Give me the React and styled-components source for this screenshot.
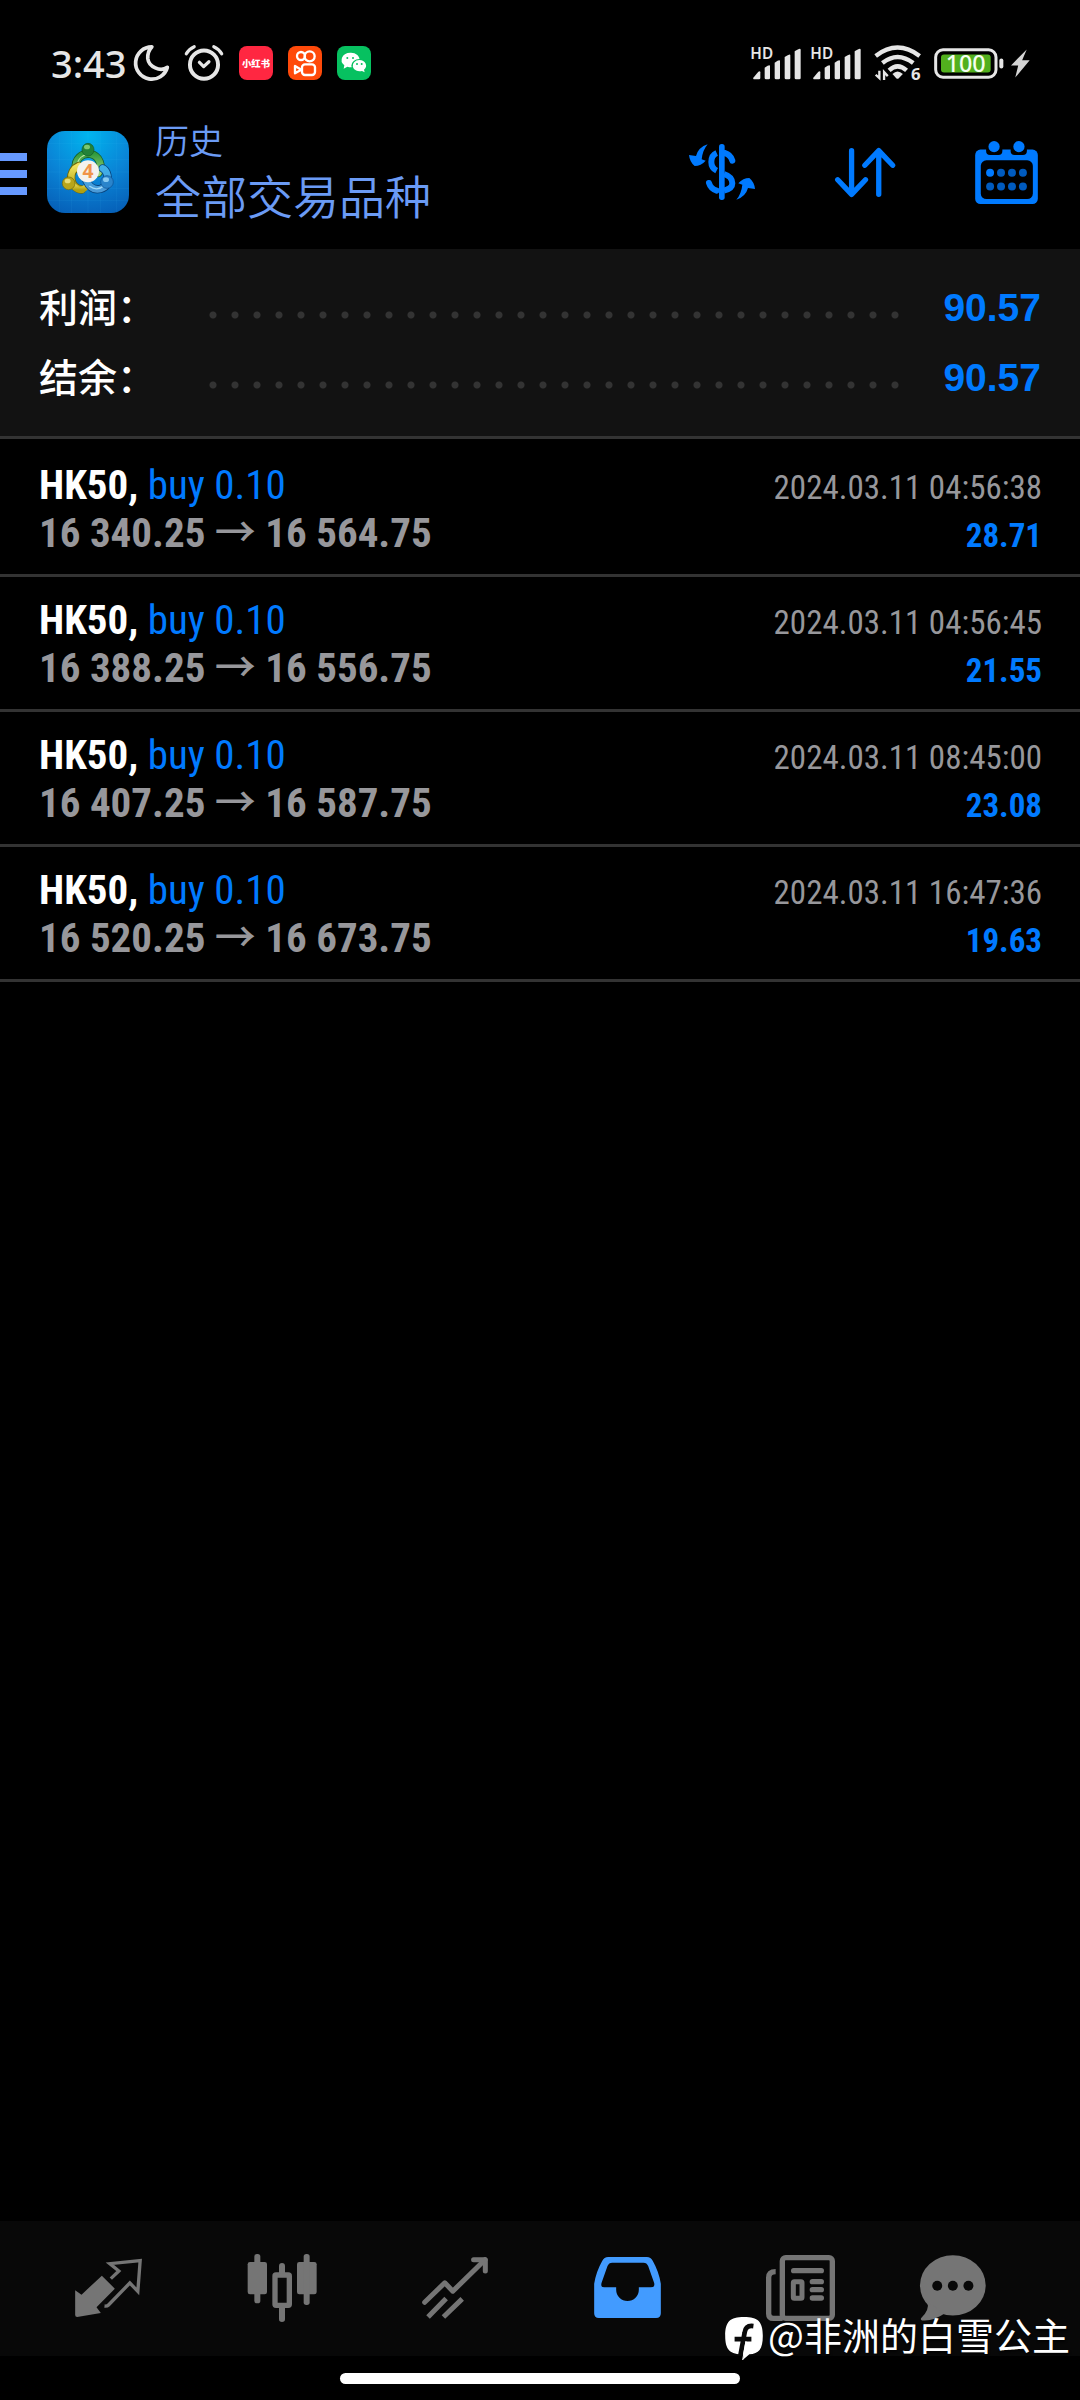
import React from 'react';
import styled, { createGlobalStyle } from 'styled-components';

const GlobalStyle = createGlobalStyle`
  * {
    box-sizing: border-box;
  }
  body {
    margin: 0;
    background-color: #000;
  }
  button {
    display: flex;
    align-items: center;
    justify-content: center;
    padding: 0;
    border: 0;
    background: none;
    color: inherit;
    cursor: pointer;
  }
  svg {
    display: block;
    flex-shrink: 0;
    overflow: visible;
  }
`;

const cjk = '"Noto Sans CJK SC", sans-serif';
const narrow = `"Roboto Condensed", Roboto, ${cjk}`;

const PageStyles = styled.div`
  min-height: 100vh;
  display: flex;
  flex-direction: column;
  background-color: #000;
  color: #fff;
  font-family: Roboto, ${cjk};
`;

const StatusBar = styled.div`
  display: flex;
  align-items: center;
  justify-content: space-between;
  padding: 44px 50px 13px 51px;
  color: #e6e6e6;
`;

const StatusGroup = styled.div`
  display: flex;
  align-items: center;
  gap: ${(props) => props.$gap}px;
`;

const Clock = styled.span`
  font-family: 'Noto Sans', sans-serif;
  font-size: 38px;
  font-weight: 500;
  line-height: 38px;
`;

const Header = styled.header`
  display: flex;
  align-items: center;
  justify-content: space-between;
  height: 154px;
  padding-right: 42px;
  color: #6b9bf5;
`;

const HeaderStart = styled.div`
  display: flex;
  align-items: center;
`;

const MenuButton = styled.button`
  width: 27px;
  margin-right: 20px;
  padding-top: 3px;
  .lines {
    width: 100%;
    display: grid;
    gap: 9px;
  }
  .lines span {
    height: 8px;
    background-color: #6699ff;
  }
`;

const Titles = styled.div`
  display: grid;
  gap: 3px;
  margin-left: 26px;
  padding-bottom: 4px;
  font-family: ${cjk};
  font-weight: 350;
  h1,
  p {
    margin: 0;
    font-weight: inherit;
  }
  p {
    font-size: 34px;
    line-height: 44px;
  }
  h1 {
    font-size: 46px;
    line-height: 58px;
  }
`;

const HeaderActions = styled.div`
  display: flex;
  align-items: center;
  gap: 80px;
  color: #007aff;
`;

const Summary = styled.dl`
  margin: 0;
  padding: 24px 39px 23px;
  background-color: #121212;
  border-bottom: 3px solid #333;
`;

const SummaryRow = styled.div`
  display: flex;
  align-items: center;
  height: 70px;
  dt {
    width: 163px;
    padding-bottom: 7px;
    font-family: ${cjk};
    font-size: 39px;
    font-weight: 500;
  }
  dd {
    width: 135px;
    margin: 0;
    text-align: right;
    font-family: 'Liberation Sans', sans-serif;
    font-size: 39px;
    font-weight: 700;
    color: #007aff;
  }
`;

const Leader = styled.span`
  flex: 1;
  height: 8px;
  margin-top: 14px;
  background-image: radial-gradient(circle, #333 3px, transparent 4px);
  background-size: 22px 8px;
  background-repeat: repeat-x;
`;

const Deals = styled.ul`
  flex: 1;
  margin: 0;
  padding: 3px 0 0;
  list-style: none;
  font-family: ${narrow};
`;

const DealRow = styled.li`
  padding: 19px 38px 17px 39px;
  border-bottom: 3px solid #333;
`;

const DealLine = styled.div`
  display: flex;
  align-items: baseline;
  justify-content: space-between;
  height: 48px;
  font-size: 41px;
  line-height: 48px;
  color: #97979b;
  white-space: nowrap;
`;

const Side = styled.span`
  color: #007aff;
`;

const Symbol = styled.strong`
  color: #fff;
`;

const Prices = styled.span`
  font-weight: 700;
`;

const Arrow = styled.span`
  font-family: ${cjk};
  font-weight: 500;
  line-height: 0;
`;

const DealTime = styled.time`
  font-size: 33px;
`;

const Profit = styled.span`
  font-size: 33px;
  font-weight: 700;
  color: #007aff;
`;

const Footer = styled.footer`
  position: relative;
`;

const TabBar = styled.nav`
  display: flex;
  height: 135px;
  padding: 0 61px 2px 22px;
  background-color: #080808;
`;

const Tab = styled.button`
  flex: ${(props) => (props.$last ? 132 : 173)} 1 0;
  color: ${(props) => (props.$active ? '#429bff' : '#757575')};
`;

const GestureArea = styled.div`
  padding: 17px 0 16px;
  span {
    display: block;
    width: 37%;
    height: 11px;
    margin: 0 auto;
    border-radius: 6px;
    background-color: #fff;
  }
`;

const Watermark = styled.div`
  position: absolute;
  right: 10px;
  bottom: 30px;
  display: flex;
  align-items: center;
  gap: 5px;
  font-family: ${cjk};
  font-size: 38px;
  line-height: 56px;
  text-shadow: 1px 2px 2px rgba(0, 0, 0, 0.6);
  span {
    padding-bottom: 8px;
  }
`;

const MoonIcon = () => (
  <svg width="35" height="36" viewBox="0 0 104 106" fill="none" stroke="currentColor" strokeWidth="11" strokeLinejoin="round">
    <path d="M53 5A48 48 0 1 0 99 66C78 80 44 65 41 40C40 25 46 12 53 5z" />
  </svg>
);

const AlarmIcon = () => (
  <svg width="40" height="36" viewBox="0 0 120 110" fill="none" stroke="currentColor" strokeWidth="10" strokeLinecap="round">
    <circle cx="60" cy="60" r="43" strokeWidth="12" />
    <path d="M46 53L59 66L75 51" strokeLinejoin="round" />
    <path d="M6 27Q14 12 30 5M114 27Q106 12 90 5" />
  </svg>
);

const RednoteIcon = () => (
  <svg width="34" height="34" viewBox="0 0 102 102">
    <rect width="102" height="102" rx="24" fill="#ff2741" />
    <text x="51" y="62" textAnchor="middle" fontFamily="Noto Sans CJK SC" fontWeight="900" fontSize="28" fill="#fff">
      小红书
    </text>
  </svg>
);

const KuaishouIcon = () => (
  <svg width="34" height="34" viewBox="0 0 102 102">
    <rect width="102" height="102" rx="24" fill="#ff4a0a" />
    <g fill="none" stroke="#fff" strokeWidth="7" strokeLinejoin="round">
      <circle cx="39" cy="30" r="12" />
      <circle cx="65" cy="31" r="15" />
      <rect x="42" y="55" width="39" height="32" rx="9" />
      <path d="M40 71L21 60V82z" />
    </g>
  </svg>
);

const WechatIcon = () => (
  <svg width="34" height="34" viewBox="0 0 102 102">
    <rect width="102" height="102" rx="24" fill="#07c160" />
    <path d="M40 20a26 22 0 0 0-18 38l-2 10 11-6a26 22 0 1 0 9-42z" fill="#fff" />
    <ellipse cx="67" cy="59" rx="24" ry="20" fill="#07c160" />
    <path d="M67 42a21 17 0 1 0 8 33l8 4-2-8a21 17 0 0 0-14-29z" fill="#fff" />
    <g fill="#07c160">
      <circle cx="31" cy="36" r="3" />
      <circle cx="48" cy="36" r="3" />
      <circle cx="60" cy="54" r="3" />
      <circle cx="74" cy="54" r="3" />
    </g>
  </svg>
);

const SignalIcon = () => (
  <svg width="51" height="33" viewBox="0 0 153 99" fill="currentColor">
    <text x="-2" y="36" fontFamily="Noto Sans" fontWeight="600" fontSize="46">
      HD
    </text>
    <path d="M7 92L22 74Q28 70 28 76V93Q28 97 24 97H9Q5 97 7 92z" />
    <path d="M41 62Q56 52 57 56V93Q57 97 53 97H45Q41 97 41 93z" />
    <path d="M71 47Q87 36 87 42V93Q87 97 83 97H75Q71 97 71 93z" />
    <path d="M101 30Q118 18 118 25V93Q118 97 114 97H105Q101 97 101 93z" />
    <path d="M131 13Q149 0 149 8V93Q149 97 145 97H135Q131 97 131 93z" />
  </svg>
);

const WifiIcon = () => (
  <svg width="48" height="36" viewBox="0 0 143 106" fill="none" stroke="currentColor" strokeWidth="13">
    <path d="M5 32Q70 -18 136 32" />
    <path d="M25 53Q70 17 117 53" />
    <path d="M45 75Q70 51 97 75" />
    <path d="M55 86Q70 70 86 86L73 99Q70 101 67 99z" fill="currentColor" stroke="none" />
    <path d="M16 76V98L5 88M30 104V80L41 92" strokeWidth="7" />
    <text x="110" y="103" fontFamily="Noto Sans" fontWeight="700" fontSize="50" fill="currentColor" stroke="none">
      6
    </text>
  </svg>
);

const BatteryIcon = () => (
  <svg width="70" height="31" viewBox="0 0 210 92">
    <rect x="5" y="5" width="181" height="82" rx="22" fill="none" stroke="currentColor" strokeWidth="9" />
    <rect x="21" y="19" width="149" height="54" rx="9" fill="#52b01e" />
    <rect x="196" y="31" width="12" height="30" rx="6" fill="currentColor" />
    <text x="95" y="71" textAnchor="middle" fontFamily="Noto Sans" fontWeight="500" fontSize="70" fill="#f4fff0">
      100
    </text>
  </svg>
);

const BoltIcon = () => (
  <svg width="19" height="29" viewBox="0 0 58 86" fill="#d4d4d4">
    <path d="M48 0L0 49H22L13 86L57 33H34z" />
  </svg>
);

const AppLogo = () => (
  <svg width="82" height="82" viewBox="0 0 246 246">
    <defs>
      <radialGradient id="tile" cx="50%" cy="5%" r="100%">
        <stop offset="0" stopColor="#00b4ee" />
        <stop offset="0.55" stopColor="#0a84d6" />
        <stop offset="1" stopColor="#0660b8" />
      </radialGradient>
      <linearGradient id="green" x1="0" y1="0" x2="0" y2="1">
        <stop offset="0" stopColor="#2f9a3c" />
        <stop offset="1" stopColor="#9ad07a" />
      </linearGradient>
      <linearGradient id="yellow" x1="0" y1="0" x2="0" y2="1">
        <stop offset="0" stopColor="#f0e25c" />
        <stop offset="1" stopColor="#b0a010" />
      </linearGradient>
      <linearGradient id="blue" x1="0" y1="0" x2="0" y2="1">
        <stop offset="0" stopColor="#3fb0ea" />
        <stop offset="1" stopColor="#4a9ad8" />
      </linearGradient>
    </defs>
    <rect width="246" height="246" rx="54" fill="url(#tile)" />
    <path
      d="M37 0V246M74 0V246M123 0V246M160 0V246M209 0V246M0 37H246M0 86H246M0 123H246M0 172H246M0 209H246"
      stroke="#5fd0ff"
      strokeOpacity="0.12"
      strokeWidth="2"
    />
    <g fill="none" strokeLinecap="round">
      <path d="M87 112A37 37 0 1 1 154 126" stroke="#175f2a" strokeWidth="25" />
      <path d="M87 112A37 37 0 1 1 154 126" stroke="url(#green)" strokeWidth="20" />
      <path d="M91 98A34 34 0 0 1 120 71" stroke="#b9e6a0" strokeWidth="4" />
      <path d="M96 105A37 37 0 0 0 104 176" stroke="#6f6808" strokeWidth="25" />
      <path d="M96 105A37 37 0 0 0 104 176" stroke="url(#yellow)" strokeWidth="20" />
      <path d="M72 158Q96 187 114 171" stroke="url(#yellow)" strokeWidth="18" />
      <path d="M118 148Q132 180 160 174Q188 166 181 132Q177 116 167 112" stroke="#07447e" strokeWidth="25" />
      <path d="M118 148Q132 180 160 174Q188 166 181 132Q177 116 167 112" stroke="url(#blue)" strokeWidth="20" />
      <path d="M128 166Q150 182 171 164" stroke="#a3dcfa" strokeWidth="4" />
    </g>
    <ellipse cx="123" cy="56" rx="18" ry="19" fill="#228238" stroke="#145c26" strokeWidth="2" />
    <ellipse cx="120" cy="48" rx="9" ry="7" fill="#7bc873" />
    <circle cx="65" cy="157" r="19" fill="#b8a51a" stroke="#716909" strokeWidth="2" />
    <ellipse cx="62" cy="150" rx="9" ry="7" fill="#e8dc74" />
    <circle cx="180" cy="153" r="19" fill="#2a84cb" stroke="#0a4f91" strokeWidth="2" />
    <ellipse cx="177" cy="146" rx="9" ry="7" fill="#87caf2" />
    <circle cx="123" cy="121" r="33" fill="#f4f2ee" />
    <text x="123" y="142" textAnchor="middle" fontFamily="Noto Sans" fontWeight="700" fontSize="58" fill="#f0944a">
      4
    </text>
  </svg>
);

const exchangeArrow = 'M56 1Q28 10 21 36L0 33Q2 54 17 66Q36 66 50 50L38 46Q41 18 56 1z';

const CurrencyIcon = () => (
  <svg width="66" height="56" viewBox="0 0 198 168" fill="currentColor">
    <rect x="90" y="0" width="17" height="168" rx="8" />
    <g fill="none" stroke="currentColor" strokeWidth="18">
      <path d="M83 27Q67 34 67 54Q67 72 83 80" />
      <path d="M107 27Q125 32 130 50" strokeLinecap="round" />
      <path d="M105 90Q130 98 130 118Q130 134 105 140" />
      <path d="M83 140Q65 134 60 117" strokeLinecap="round" />
    </g>
    <path d={exchangeArrow} />
    <path d={exchangeArrow} transform="rotate(180 99 84)" />
  </svg>
);

const SortIcon = () => (
  <svg width="60" height="49" viewBox="0 0 181 148" fill="none" stroke="currentColor" strokeWidth="16" strokeLinecap="round" strokeLinejoin="round">
    <path d="M50 8V140M8 96L50 140L92 96" />
    <path d="M132 140V8M90 52L132 8L174 52" />
  </svg>
);

const CalendarIcon = () => (
  <svg width="63" height="63" viewBox="0 0 189 190" fill="currentColor">
    <rect y="26" width="189" height="164" rx="16" />
    <rect x="17" y="58" width="157" height="117" rx="17" fill="#000" />
    <rect x="33" y="10" width="49" height="32" rx="12" fill="#000" />
    <rect x="107" y="10" width="49" height="32" rx="12" fill="#000" />
    <circle cx="57" cy="17" r="17" />
    <circle cx="132" cy="17" r="17" />
    {[96, 137].map((cy) =>
      [45, 78, 111, 144].map((cx) => (
        <circle key={`${cx}-${cy}`} cx={cx} cy={cy} r="12" opacity={cx === 45 && cy === 96 ? 1 : 0.75} />
      ))
    )}
  </svg>
);

const QuotesIcon = () => (
  <svg width="67" height="58" viewBox="0 0 200 174">
    <path d="M107 59L131 36L104 14L195 5L188 97L164 72L100 138Q96 142 88 141" fill="none" stroke="currentColor" strokeWidth="10" />
    <path d="M80 50L119 89L64 145L77 162L6 174Q0 174 0 168V94L19 107z" fill="currentColor" />
  </svg>
);

const CandlesIcon = () => (
  <svg width="70" height="68" viewBox="0 0 210 204" fill="currentColor">
    <rect x="2" y="24" width="58" height="97" rx="7" />
    <rect x="22" y="0" width="18" height="148" rx="8" />
    <rect x="150" y="24" width="59" height="97" rx="7" />
    <rect x="170" y="0" width="18" height="153" rx="8" />
    <rect x="84" y="63" width="43" height="91" rx="3" fill="none" stroke="currentColor" strokeWidth="16" />
    <path d="M96 58V36Q96 27 105 27Q114 27 114 36V58zM96 158V196Q96 204 105 204Q114 204 114 196V158z" />
  </svg>
);

const TradeIcon = () => (
  <svg width="66" height="61" viewBox="0 0 197 182" fill="none" stroke="currentColor" strokeWidth="15">
    <path d="M8 135L68 77L92 102L188 8" strokeLinecap="round" strokeLinejoin="round" />
    <path d="M154 8H189V42" strokeLinecap="round" strokeLinejoin="round" />
    <path d="M18 179L72 124M64 179L120 125" />
  </svg>
);

const HistoryIcon = () => (
  <svg width="67" height="61" viewBox="0 0 200 183" fill="currentColor">
    <path
      fillRule="evenodd"
      d="M42 0H158Q170 0 176 12Q194 44 200 80V169Q200 183 186 183H14Q0 183 0 169V80Q6 44 24 12Q30 0 42 0zM54 17Q44 17 40 27L22 78Q19 91 30 91H66V98A34 34 0 0 0 134 98V91H170Q183 91 180 78L162 27Q158 17 148 17z"
    />
  </svg>
);

const NewsIcon = () => (
  <svg width="69" height="66" viewBox="0 0 207 198" fill="none" stroke="currentColor" strokeWidth="16">
    <rect x="49" y="8" width="150" height="182" rx="10" />
    <path d="M29 50Q8 50 8 68V176Q8 190 22 190H50" />
    <rect x="82" y="80" width="26" height="50" rx="3" strokeWidth="15" />
    <g fill="currentColor" stroke="none">
      <rect x="75" y="39" width="99" height="16" rx="8" />
      <rect x="131" y="72" width="43" height="16" rx="8" />
      <rect x="131" y="96" width="43" height="16" rx="8" />
      <rect x="131" y="121" width="43" height="16" rx="8" />
    </g>
  </svg>
);

const ChatIcon = () => (
  <svg width="66" height="66" viewBox="0 0 199 198" fill="currentColor">
    <ellipse cx="99" cy="91" rx="99" ry="91" />
    <path d="M22 140Q30 166 3 190Q0 198 14 197Q45 196 74 176z" />
    <g fill="#080808">
      <circle cx="52" cy="92" r="15" />
      <circle cx="99" cy="92" r="15" />
      <circle cx="146" cy="92" r="15" />
    </g>
  </svg>
);

const WatermarkIcon = () => (
  <svg width="38" height="43" viewBox="0 0 112 128">
    <path d="M56 0C98 0 112 14 112 56C112 96 100 110 72 111L52 128L56 112C14 112 0 98 0 56C0 14 14 0 56 0z" fill="#fff" />
    <path d="M84 27Q61 24 58 46L45 116M28 66H78" fill="none" stroke="#0a0a0a" strokeWidth="14" />
    <path d="M62 72L52 128" stroke="#fff" strokeWidth="3" />
  </svg>
);

const totals = [
  { label: '利润：', value: '90.57' },
  { label: '结余：', value: '90.57' },
];

const deals = [
  { open: '16 340.25', close: '16 564.75', time: '2024.03.11 04:56:38', profit: '28.71' },
  { open: '16 388.25', close: '16 556.75', time: '2024.03.11 04:56:45', profit: '21.55' },
  { open: '16 407.25', close: '16 587.75', time: '2024.03.11 08:45:00', profit: '23.08' },
  { open: '16 520.25', close: '16 673.75', time: '2024.03.11 16:47:36', profit: '19.63' },
];

const tabs = [
  { name: 'Quotes', Icon: QuotesIcon },
  { name: 'Charts', Icon: CandlesIcon },
  { name: 'Trade', Icon: TradeIcon },
  { name: 'History', Icon: HistoryIcon },
  { name: 'News', Icon: NewsIcon },
  { name: 'Messages', Icon: ChatIcon },
];

const Deal = ({ open, close, time, profit }) => (
  <DealRow>
    <DealLine>
      <span>
        <Symbol>HK50,</Symbol> <Side>buy 0.10</Side>
      </span>
      <DealTime>{time}</DealTime>
    </DealLine>
    <DealLine>
      <Prices>
        {open} <Arrow>→</Arrow> {close}
      </Prices>
      <Profit>{profit}</Profit>
    </DealLine>
  </DealRow>
);

const App = () => {
  const [active, setActive] = React.useState('History');
  return (
    <PageStyles>
      <GlobalStyle />
      <StatusBar>
        <StatusGroup $gap={15}>
          <StatusGroup $gap={7}>
            <Clock>3:43</Clock>
            <MoonIcon />
          </StatusGroup>
          <AlarmIcon />
          <RednoteIcon />
          <KuaishouIcon />
          <WechatIcon />
        </StatusGroup>
        <StatusGroup $gap={12}>
          <StatusGroup $gap={9}>
            <SignalIcon />
            <SignalIcon />
          </StatusGroup>
          <WifiIcon />
          <StatusGroup $gap={7}>
            <BatteryIcon />
            <BoltIcon />
          </StatusGroup>
        </StatusGroup>
      </StatusBar>
      <Header>
        <HeaderStart>
          <MenuButton aria-label="Menu">
            <span className="lines">
              <span />
              <span />
              <span />
            </span>
          </MenuButton>
          <AppLogo />
          <Titles>
            <p>历史</p>
            <h1>全部交易品种</h1>
          </Titles>
        </HeaderStart>
        <HeaderActions>
          <button aria-label="Symbols">
            <CurrencyIcon />
          </button>
          <button aria-label="Sort">
            <SortIcon />
          </button>
          <button aria-label="Period">
            <CalendarIcon />
          </button>
        </HeaderActions>
      </Header>
      <Summary>
        {totals.map((item) => (
          <SummaryRow key={item.label}>
            <dt>{item.label}</dt>
            <Leader />
            <dd>{item.value}</dd>
          </SummaryRow>
        ))}
      </Summary>
      <Deals>
        {deals.map((deal) => (
          <Deal key={deal.time} {...deal} />
        ))}
      </Deals>
      <Footer>
        <TabBar>
          {tabs.map(({ name, Icon }, index) => (
            <Tab
              key={name}
              aria-label={name}
              $active={active === name}
              $last={index === tabs.length - 1}
              onClick={() => setActive(name)}
            >
              <Icon />
            </Tab>
          ))}
        </TabBar>
        <GestureArea>
          <span />
        </GestureArea>
        <Watermark>
          <WatermarkIcon />
          <span>@非洲的白雪公主</span>
        </Watermark>
      </Footer>
    </PageStyles>
  );
};

export default App;
